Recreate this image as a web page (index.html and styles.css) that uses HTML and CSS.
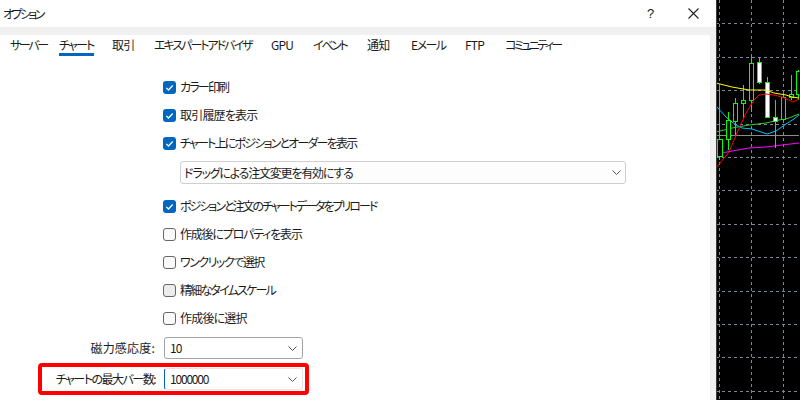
FILE: index.html
```html
<!DOCTYPE html>
<html lang="ja">
<head>
<meta charset="utf-8">
<title>オプション</title>
<link rel="stylesheet" href="styles.css">
</head>
<body>
<div class="screen">
  <div class="dialog">
    <div class="titlebar">
      <span class="title sp-f">オプション</span>
      <span class="help">?</span>
      <span class="close">
        <svg width="11" height="11" viewBox="0 0 11 11"><path d="M0.5 0.5 L10.5 10.5 M10.5 0.5 L0.5 10.5" stroke="#222" stroke-width="1.1" fill="none"/></svg>
      </span>
    </div>
    <div class="body">
      <div class="panel">
        <div class="tabs">
          <span class="tab sp-e">サーバー</span>
          <span class="tab active sp-c">チャート</span>
          <span class="tab">取引</span>
          <span class="tab sp-d">エキスパートアドバイザ</span>
          <span class="tab">GPU</span>
          <span class="tab sp-e">イベント</span>
          <span class="tab">通知</span>
          <span class="tab sp-b">Eメール</span>
          <span class="tab">FTP</span>
          <span class="tab sp-f">コミュニティー</span>
        </div>

        <div class="options">
          <label class="row"><span class="cb on"><svg width="13" height="13" viewBox="0 0 13 13"><rect width="13" height="13" rx="3" fill="#0067c0"/><path d="M3.3 6.9 L5.5 9 L9.7 4.5" stroke="#fff" stroke-width="1.3" fill="none"/></svg></span><span class="sp-c">カラー印刷</span></label>
          <label class="row"><span class="cb on"><svg width="13" height="13" viewBox="0 0 13 13"><rect width="13" height="13" rx="3" fill="#0067c0"/><path d="M3.3 6.9 L5.5 9 L9.7 4.5" stroke="#fff" stroke-width="1.3" fill="none"/></svg></span><span>取引履歴を表示</span></label>
          <label class="row"><span class="cb on"><svg width="13" height="13" viewBox="0 0 13 13"><rect width="13" height="13" rx="3" fill="#0067c0"/><path d="M3.3 6.9 L5.5 9 L9.7 4.5" stroke="#fff" stroke-width="1.3" fill="none"/></svg></span><span class="sp-c">チャート上にポジションとオーダーを表示</span></label>
          <div class="select wide">
            <span class="value sp-a">ドラッグによる注文変更を有効にする</span>
            <svg class="chev" width="9" height="5" viewBox="0 0 9 5"><path d="M0.5 0.5 L4.5 4.5 L8.5 0.5" stroke="#555" stroke-width="1" fill="none"/></svg>
          </div>
          <label class="row"><span class="cb on"><svg width="13" height="13" viewBox="0 0 13 13"><rect width="13" height="13" rx="3" fill="#0067c0"/><path d="M3.3 6.9 L5.5 9 L9.7 4.5" stroke="#fff" stroke-width="1.3" fill="none"/></svg></span><span class="sp-d">ポジションと注文のチャートデータをプリロード</span></label>
          <label class="row"><span class="cb"><svg width="13" height="13" viewBox="0 0 13 13"><rect x="0.5" y="0.5" width="12" height="12" rx="2.5" fill="#f9f9f9" stroke="#666"/></svg></span><span class="sp-a">作成後にプロパティを表示</span></label>
          <label class="row"><span class="cb"><svg width="13" height="13" viewBox="0 0 13 13"><rect x="0.5" y="0.5" width="12" height="12" rx="2.5" fill="#f9f9f9" stroke="#666"/></svg></span><span class="sp-b">ワンクリックで選択</span></label>
          <label class="row"><span class="cb"><svg width="13" height="13" viewBox="0 0 13 13"><rect x="0.5" y="0.5" width="12" height="12" rx="2.5" fill="#ececec" stroke="#666"/></svg></span><span class="sp-c">精細なタイムスケール</span></label>
          <label class="row"><span class="cb"><svg width="13" height="13" viewBox="0 0 13 13"><rect x="0.5" y="0.5" width="12" height="12" rx="2.5" fill="#f9f9f9" stroke="#666"/></svg></span><span>作成後に選択</span></label>
        </div>

        <div class="fields">
          <div class="field">
            <span class="label sp-loose">磁力感応度:</span>
            <div class="select combo">
              <span class="value">10</span>
              <svg class="chev" width="9" height="5" viewBox="0 0 9 5"><path d="M0.5 0.5 L4.5 4.5 L8.5 0.5" stroke="#555" stroke-width="1" fill="none"/></svg>
            </div>
          </div>
          <div class="field highlight">
            <span class="label sp-b">チャートの最大バー数:</span>
            <div class="select combo focus">
              <span class="value sp-a">1000000</span>
              <svg class="chev" width="9" height="5" viewBox="0 0 9 5"><path d="M0.5 0.5 L4.5 4.5 L8.5 0.5" stroke="#555" stroke-width="1" fill="none"/></svg>
            </div>
          </div>
        </div>
      </div>
    </div>
  </div>

  <div class="chart">
    <svg width="83" height="400" viewBox="717 0 83 400">
      <rect x="717" y="0" width="83" height="400" fill="#000"/>
      <g stroke="#778899" stroke-width="1" stroke-dasharray="3 3" fill="none">
        <path d="M720.5 0 V400 M752.5 0 V400 M784.5 0 V400"/>
        <path d="M717 23.5 H800 M717 57.5 H800 M717 90.5 H800 M717 124.5 H800 M717 157.5 H800 M717 190.5 H800 M717 224.5 H800 M717 257.5 H800 M717 291.5 H800 M717 324.5 H800 M717 357.5 H800 M717 391.5 H800"/>
      </g>
      <path d="M717 135.5 H800" stroke="#8c8c8c" stroke-width="1"/>
      <polyline fill="none" stroke="#ff00ff" stroke-width="1" points="717,154 733,151 750,148 767,147 783,145 800,143"/>
      <polyline fill="none" stroke="#32cd32" stroke-width="1" points="717,132 733,128 750,125 767,123 780,120 790,118 800,114"/>
      <polyline fill="none" stroke="#00bfff" stroke-width="1" points="717,106 728,118 737,125 743,128 753,129 762,132 768,134 777,131 787,124 795,119 800,115"/>
      <g stroke="#00ff00" stroke-width="1">
        <path d="M720.5 87 V160 M729.5 112 V150 M736.5 98 V135 M744.5 85 V118 M752.5 57 V112 M760.5 57 V84 M768.5 77 V118 M776.5 100 V148 M784.5 93 V121 M792.5 75 V100 M799.5 70 V100"/>
        <rect x="718.5" y="139.5" width="5" height="17" fill="#000"/>
        <rect x="727.5" y="120.5" width="4" height="19" fill="#000"/>
        <rect x="734.5" y="103.5" width="4" height="18" fill="#000"/>
        <rect x="742.5" y="100.5" width="4" height="3" fill="#000"/>
        <rect x="750.5" y="63.5" width="4" height="37" fill="#000"/>
        <rect x="758.5" y="62.5" width="4" height="20" fill="#fff"/>
        <rect x="766.5" y="82.5" width="4" height="35" fill="#fff"/>
        <rect x="774.5" y="117.5" width="4" height="4" fill="#fff"/>
        <rect x="782.5" y="97.5" width="4" height="22" fill="#000"/>
        <rect x="790.5" y="94.5" width="4" height="3" fill="#000"/>
        <rect x="797.5" y="71.5" width="5" height="23" fill="#000"/>
      </g>
      <polyline fill="none" stroke="#ffff00" stroke-width="1" points="717,83 733,87 750,90 767,90 775,93 787,95 793,97 800,98"/>
      <polyline fill="none" stroke="#ff0000" stroke-width="1" points="717,168 730,152 738,133 747,113 755,100 760,95 767,94 775,95 783,97 790,100 794,102 800,99"/>
      <path d="M717.5 0 V400" stroke="#3a3a3a" stroke-width="1"/>
    </svg>
  </div>
</div>
</body>
</html>
```

FILE: styles.css
```css
html, body {
  margin: 0;
  padding: 0;
  background: #000;
}

body {
  font-family: "Noto Sans CJK JP", "Noto Sans", sans-serif;
  font-size: 12px;
  color: #1b1b1b;
  font-feature-settings: "palt";
  letter-spacing: -0.8px;
}

/* per-text tracking to mimic the narrow kana of the Windows UI font */
.sp-loose { letter-spacing: 0.2px; }
.sp-a { letter-spacing: -1.2px; }
.sp-b { letter-spacing: -1.5px; }
.sp-c { letter-spacing: -1.8px; }
.sp-d { letter-spacing: -2px; }
.sp-e { letter-spacing: -2.3px; }
.sp-f { letter-spacing: -2.6px; }

.screen {
  display: flex;
  width: 800px;
  height: 400px;
  overflow: hidden;
}

.dialog {
  width: 716px;
  flex: none;
  background: #f0f0f0;
  display: flex;
  flex-direction: column;
}

.titlebar {
  height: 27px;
  flex: none;
  background: #fff;
  display: flex;
  align-items: center;
}

.title {
  padding-left: 3px;
  line-height: 16px;
}

.help {
  margin-left: auto;
  width: 8px;
  font-size: 13px;
  line-height: 16px;
  color: #222;
  letter-spacing: 0;
  font-family: "Liberation Sans", sans-serif;
}

.close {
  margin-left: 33px;
  margin-right: 17px;
  width: 11px;
  height: 11px;
  display: flex;
}

.body {
  flex: 1;
  padding-top: 8px;
  padding-right: 6px;
  display: flex;
}

.panel {
  flex: 1;
  background: #fff;
  display: flex;
  flex-direction: column;
}

.tabs {
  display: grid;
  grid-template-columns: 49px 53px 42px 117px 42px 54px 44px 54px 40px auto;
  padding-left: 10px;
  height: 21px;
}

.tab {
  justify-self: start;
  padding-top: 2px;
  line-height: 16px;
  border-bottom: 3px solid transparent;
  white-space: nowrap;
}

.tab.active {
  border-bottom-color: #0067c0;
}

.options {
  margin-top: 17px;
  padding-left: 163px;
  display: flex;
  flex-direction: column;
}

.row {
  height: 28px;
  display: flex;
  align-items: center;
  gap: 4px;
  line-height: 16px;
  white-space: nowrap;
}

.cb {
  width: 13px;
  height: 13px;
  display: flex;
  flex: none;
}

.select {
  box-sizing: border-box;
  display: flex;
  align-items: center;
  background: #fff;
  border-radius: 3px;
  line-height: 16px;
  white-space: nowrap;
}

.select .chev {
  margin-left: auto;
  flex: none;
}

.select.wide {
  margin: 4px 0 8px 17px;
  width: 446px;
  height: 23px;
  border: 1px solid #cfcfcf;
  background: #fdfdfd;
  padding-left: 3px;
}

.select.wide .chev {
  margin-right: 4px;
}

.fields {
  margin-top: 5px;
  padding-left: 42px;
  display: flex;
  flex-direction: column;
}

.field {
  display: grid;
  grid-template-columns: 113px 139px;
  column-gap: 9px;
  align-items: center;
  line-height: 16px;
  width: fit-content;
}

.label {
  text-align: right;
  white-space: nowrap;
}

.select.combo {
  height: 22px;
  border: 1px solid #a3a3a3;
  padding-left: 5px;
}

.select.combo .chev {
  margin-right: 5px;
}

.field.highlight {
  margin-top: 4px;
  margin-left: -4px;
  border: 4px solid #ff0000;
  border-radius: 4px;
  padding: 1px 2px 1px 0;
}

.select.combo.focus {
  border-color: #e4e4e4;
  border-left-color: #0067c0;
}

.chart {
  flex: 1;
  display: flex;
}
```
